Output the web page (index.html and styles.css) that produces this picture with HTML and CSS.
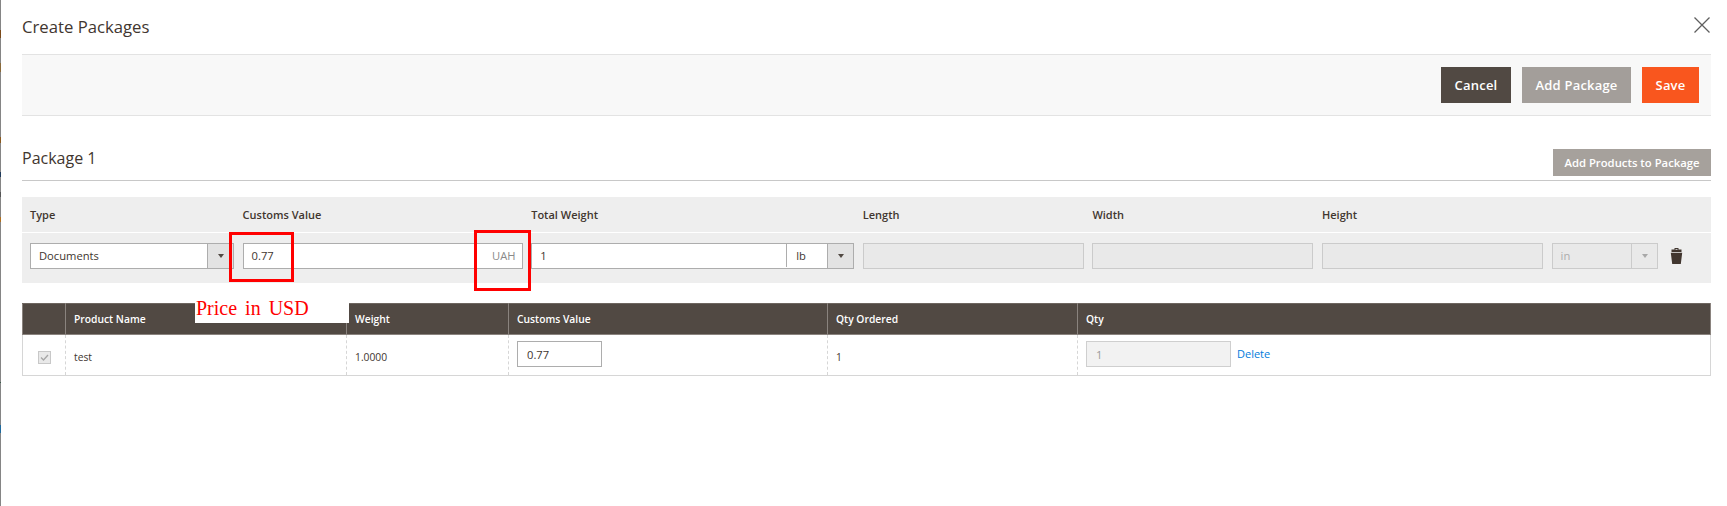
FILE: index.html
```html
<!DOCTYPE html>
<html lang="en">
<head>
<meta charset="utf-8">
<title>Create Packages</title>
<link rel="stylesheet" href="styles.css">
</head>
<body>
<div class="edge"></div>
<main class="modal">
  <header class="modal-head">
    <h1 class="title">Create Packages</h1>
    <svg class="close" viewBox="0 0 16 16" width="16" height="16"><path d="M0.5 0.5L15.5 15.5M15.5 0.5L0.5 15.5"/></svg>
  </header>
  <div class="toolbar">
    <button class="btn btn-dark">Cancel</button>
    <button class="btn btn-grey">Add Package</button>
    <button class="btn btn-save">Save</button>
  </div>
  <section class="package">
    <div class="package-head">
      <h2 class="title package-title">Package 1</h2>
      <button class="btn-small">Add Products to Package</button>
    </div>
    <div class="fields fields-labels">
      <span>Type</span>
      <span>Customs Value</span>
      <span>Total Weight</span>
      <span>Length</span>
      <span>Width</span>
      <span>Height</span>
    </div>
    <div class="fields fields-inputs">
      <div class="control select"><span class="val">Documents</span><span class="caret"></span></div>
      <div class="control"><span class="val">0.77</span><span class="addon">UAH</span></div>
      <div class="control"><span class="val">1</span><span class="unit">lb</span><span class="caret"></span></div>
      <div class="control off"></div>
      <div class="control off"></div>
      <div class="control off"></div>
      <div class="control off select"><span class="val">in</span><span class="caret"></span></div>
      <svg class="trash" viewBox="0 0 13 16" width="13" height="16"><path d="M4.5 0h4v1.5h3V4H1.500V1.500h3zM5.500 1v.7h2V1zM0.800 4.800h11.400L10.800 16H2.200z"/></svg>
    </div>
    <table class="items">
      <colgroup>
        <col class="c1"><col class="c2"><col class="c3"><col class="c4"><col class="c5"><col class="c6">
      </colgroup>
      <thead>
        <tr><th></th><th>Product Name</th><th>Weight</th><th>Customs Value</th><th>Qty Ordered</th><th>Qty</th></tr>
      </thead>
      <tbody>
        <tr>
          <td class="check-cell"><svg class="check" viewBox="0 0 13 13" width="13" height="13"><rect x="0.500" y="0.500" width="12" height="12"/><path d="M3 6.500l2.500 2.500L10 4"/></svg></td>
          <td class="low">test</td>
          <td class="low">1.0000</td>
          <td class="high"><span class="cell-input">0.77</span></td>
          <td class="low">1</td>
          <td class="high"><span class="cell-input qty">1</span><a class="delete" href="#">Delete</a></td>
        </tr>
      </tbody>
    </table>
  </section>
</main>
<div class="mark mark-a"></div>
<div class="mark mark-b"></div>
<div class="note">Price in USD</div>
</body>
</html>
```
FILE: styles.css
```css
* { box-sizing: border-box; }
html, body { margin: 0; height: 100%; background: #fff; }
body {
  display: flex;
  position: relative;
  overflow: hidden;
  font-family: "Open Sans", "Liberation Sans", sans-serif;
  font-size: 11.2px;
  color: #41362f;
}
.edge {
  width: 1px;
  flex: none;
  background: linear-gradient(
    #858585 0 30px, #7a4a1a 30px 38px, #858585 38px 63px,
    #8a6a3a 63px 72px, #858585 72px 137px, #8a5a20 137px 143px,
    #858585 143px 172px, #1f3a5a 172px 177px, #858585 177px 192px,
    #555 192px 197px, #858585 197px 217px, #b07020 217px 222px,
    #858585 222px 382px, #3a5a4a 382px 383px, #858585 383px 425px,
    #1f6a9e 425px 433px, #858585 433px
  );
}
.modal { flex: 1; padding: 0 17px 0 21px; }
.modal-head {
  position: relative;
  height: 54px;
  padding-top: 16px;
}
.title {
  margin: 0;
  font-size: 16.700px;
  font-weight: 400;
  line-height: 22px;
  color: #41362f;
}
.close {
  position: absolute;
  right: 1px;
  top: 17px;
  fill: none;
  stroke: #5f5f5f;
  stroke-width: 1.300;
}
.toolbar {
  display: flex;
  justify-content: flex-end;
  gap: 11px;
  height: 62px;
  padding: 12px 12px 0 0;
  background: #f8f8f8;
  border-top: 1px solid #e3e3e3;
  border-bottom: 1px solid #e3e3e3;
}
.btn, .btn-small {
  border: 0;
  padding: 0;
  font-family: inherit;
  font-weight: 600;
  color: #fff;
}
.btn { height: 36px; font-size: 13px; letter-spacing: .2px; }
.btn-dark { width: 70px; background: #514943; }
.btn-grey { width: 109px; background: #a39e9a; }
.btn-save { width: 57px; background: #f9561e; }
.package { padding-top: 33px; }
.package-head {
  display: flex;
  justify-content: space-between;
  height: 32px;
  border-bottom: 1px solid #c8c8c8;
  margin-bottom: 16px;
}
.package-head .package-title { margin-top: -2px; font-size: 16px; }
.btn-small {
  width: 158px;
  height: 27px;
  font-size: 11.300px;
  background: #a6a19c;
}
.fields {
  display: grid;
  grid-template-columns: 204px 280px 323px 221px 221px 221px 106px 13px;
  column-gap: 8.600px;
  padding-left: 8px;
  background: #eee;
}
.fields-labels {
  height: 35px;
  align-items: center;
  font-size: 11px;
  font-weight: 600;
  color: #41362f;
}
.fields-inputs {
  height: 50px;
  margin-top: 1px;
  padding-top: 10px;
  align-items: start;
}
.control {
  display: flex;
  align-items: center;
  height: 26px;
  padding-bottom: 1px;
  background: #fff;
  border: 1px solid #adadad;
}
.val { flex: 1; padding-left: 8px; color: #41362f; }
.addon { padding-right: 6px; color: #8a8a8a; }
.unit {
  align-self: stretch;
  display: flex;
  align-items: center;
  width: 41px;
  padding-left: 9px;
  border-left: 1px solid #adadad;
}
.caret {
  position: relative;
  align-self: stretch;
  flex: none;
  width: 26px;
  margin-bottom: -1px;
  background: #e3e3e3;
  border-left: 1px solid #adadad;
}
.caret::after {
  content: "";
  position: absolute;
  left: 10px;
  top: 10px;
  border-top: 4px solid #514943;
  border-left: 3px solid transparent;
  border-right: 3px solid transparent;
}
.off { background: #e9e9e9; border-color: #cbcbcb; }
.off .val { color: #adadad; }
.off .caret { background: #e9e9e9; border-left-color: #cbcbcb; }
.off .caret::after { border-top-color: #a8a8a8; }
.trash { margin: 5px 0 0 4px; fill: #41362f; }
.items {
  width: 1688px;
  margin-top: 20px;
  table-layout: fixed;
  border-collapse: collapse;
}
.c1 { width: 43px; }
.c2 { width: 281px; }
.c3 { width: 162px; }
.c4 { width: 319px; }
.c5 { width: 250px; }
.c6 { width: 633px; }
.items th {
  height: 31px;
  padding: 0 8px;
  text-align: left;
  font-size: 10.300px;
  font-weight: 600;
  color: #fff;
  background: #514943;
  border-left: 1px solid #8a837e;
  border-right: 1px solid #8a837e;
  border-top: 1px solid #6e6660;
  border-bottom: 1px solid #8a837e;
}
.items td {
  height: 41px;
  padding: 0 8px;
  border-bottom: 1px solid #d6d6d6;
  border-left: 1px dashed #d6d6d6;
  border-right: 1px dashed #d6d6d6;
}
.items td:first-child { border-left: 1px solid #d6d6d6; }
.items td:last-child { border-right: 1px solid #d6d6d6; }
.items td.low { padding-top: 4px; font-size: 10.300px; }
.items td.high { padding-bottom: 3px; }
.check { display: block; margin: 4px auto 0 7px; fill: #e9e9e9; stroke: #c8c8c8; }
.check path { fill: none; stroke: #a6a6a6; stroke-width: 1.300; }
.cell-input {
  display: inline-block;
  width: 85px;
  height: 26px;
  padding-left: 9px;
  line-height: 25px;
  vertical-align: middle;
  border: 1px solid #adadad;
}
.qty { width: 145px; color: #9a9a9a; background: #f2f2f2; border-color: #cfcfcf; }
.delete { margin-left: 6px; font-size: 11px; color: #007bdb; text-decoration: none; vertical-align: middle; }
.mark { position: absolute; border: 3px solid #f00; }
.mark-a { left: 229px; top: 232px; width: 65px; height: 50px; }
.mark-b { left: 474px; top: 230px; width: 57px; height: 61px; }
.note {
  position: absolute;
  left: 195px;
  top: 303px;
  width: 154px;
  height: 20px;
  padding-left: 1px;
  background: #fff;
  color: #f00;
  font-family: "Liberation Serif", serif;
  font-size: 20px;
  line-height: 10px;
  word-spacing: 3px;
}
```
